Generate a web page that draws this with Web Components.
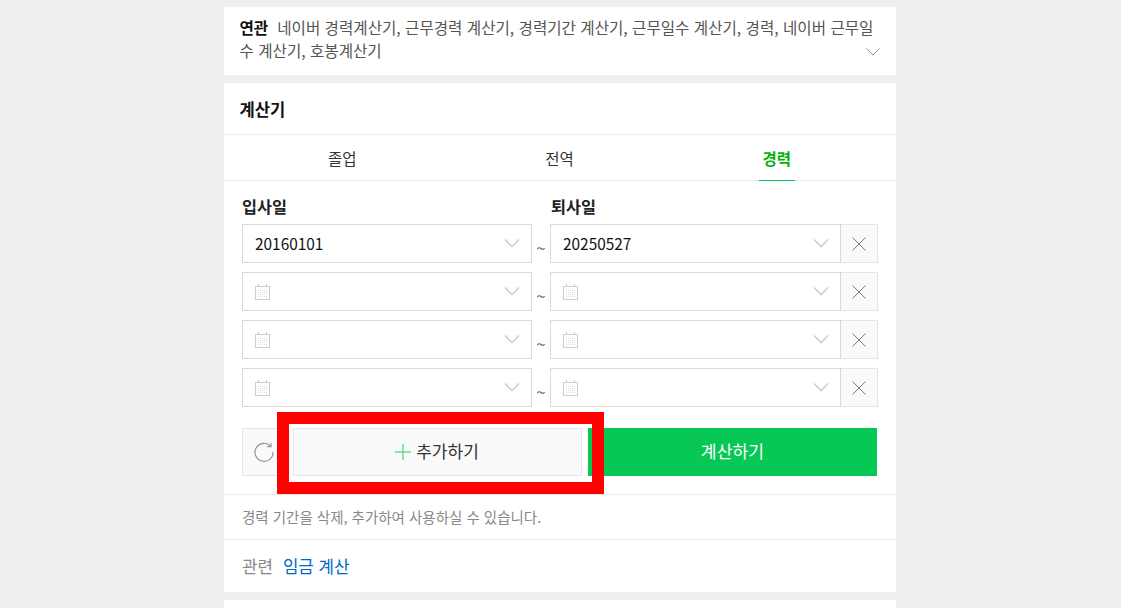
<!DOCTYPE html>
<html lang="ko">
<head>
<meta charset="utf-8">
<title>경력 계산기</title>
<style>
  html, body { margin: 0; height: 608px; overflow: hidden; background: #eeeff1; }
  body { font-family: "Noto Sans CJK KR", "Noto Sans", sans-serif; }
</style>
</head>
<body>
<search-page>
  <related-box label="연관">네이버 경력계산기, 근무경력 계산기, 경력기간 계산기, 근무일수 계산기, 경력, 네이버 근무일수 계산기, 호봉계산기</related-box>
  <calc-card heading="계산기">
    <calc-tabs slot="tabs"></calc-tabs>
    <date-row start="20160101" end="20250527"></date-row>
    <date-row></date-row>
    <date-row></date-row>
    <date-row></date-row>
  </calc-card>
  <div style="height:8px;background:#fff"></div>
</search-page>

<script>
const CHEVRON = `<svg width="16" height="10" viewBox="0 0 16 10" fill="none" stroke="#cfcfcf" stroke-width="1.6"><path d="M1 1.5l7 7 7-7"/></svg>`;
const CALENDAR = `<svg width="15" height="16" viewBox="0 0 15 16" fill="none"><path d="M3.500 0v4M11.500 0v4" stroke="#c4c4c4"/><rect x=".5" y="2.500" width="14" height="13" fill="#fff" stroke="#cfcfcf"/><path d="M3 6.500h9M3 8.500h9M3 10.500h9M3 12.500h9" stroke="#dedede" stroke-dasharray="1 1"/></svg>`;

class SearchPage extends HTMLElement {
  constructor() {
    super();
    this.attachShadow({ mode: 'open' }).innerHTML = `
      <style>
        :host { display: flex; flex-direction: column; gap: 8px; width: 672px; margin-left: 224px; padding-top: 7px; }
      </style>
      <slot></slot>`;
  }
}
customElements.define('search-page', SearchPage);

class RelatedBox extends HTMLElement {
  constructor() {
    super();
    this.attachShadow({ mode: 'open' }).innerHTML = `
      <style>
        :host { display: block; position: relative; background: #fff; height: 68px; box-sizing: border-box; padding: 9px 16px 0 15.5px; font-size: 15.6px; line-height: 23px; color: #555; }
        b { color: #111; font-weight: 700; margin-right: 9px; }
        .toggle { position: absolute; right: 16px; top: 41px; line-height: 0; }
      </style>
      <b></b><slot></slot>
      <span class="toggle"><svg width="14" height="8" viewBox="0 0 14 8" fill="none" stroke="#8f8f8f" stroke-width="1"><path d="M.5.5L7 7l6.500-6.500"/></svg></span>`;
    this.shadowRoot.querySelector('b').textContent = this.getAttribute('label');
  }
}
customElements.define('related-box', RelatedBox);

class CalcTabs extends HTMLElement {
  constructor() {
    super();
    this.attachShadow({ mode: 'open' }).innerHTML = `
      <style>
        :host { display: grid; grid-template-columns: 1fr 1fr 1fr; box-sizing: border-box; height: 46px; padding: 0 10.5px 0 9.5px; border-bottom: 1px solid #ebebeb; font-size: 15.5px; color: #333; }
        span { display: flex; justify-content: center; }
        i { font-style: normal; display: block; height: 46px; box-sizing: border-box; line-height: 47px; padding: 0 3.5px; }
        .on i { color: #03b20a; font-weight: 700; border-bottom: 1px solid #03c75a; }
      </style>
      <span><i>졸업</i></span><span><i>전역</i></span><span class="on"><i>경력</i></span>`;
  }
}
customElements.define('calc-tabs', CalcTabs);

class DateRow extends HTMLElement {
  constructor() {
    super();
    const field = v => `<div class="field">${v ? `<span class="val">${v}</span>` : CALENDAR}<span class="chev">${CHEVRON}</span></div>`;
    this.attachShadow({ mode: 'open' }).innerHTML = `
      <style>
        :host { display: grid; grid-template-columns: 290px 18px 291px 37px; grid-template-rows: 39px; height: 39px; }
        .field { display: flex; align-items: center; justify-content: space-between; box-sizing: border-box; border: 1px solid #d9d9d9; padding: 0 11px 0 12px; background: #fff; }
        .val { font-size: 15.4px; color: #111; margin-top: -2px; }
        .chev { line-height: 0; margin-top: -2px; }
        svg { display: block; }
        .tilde { font-size: 17px; color: #666; text-align: center; line-height: 48px; height: 39px; }
        .del { display: flex; align-items: center; justify-content: center; box-sizing: border-box; border: 1px solid #e3e5e9; border-left: 0; background: #f9fafc; }
      </style>
      ${field(this.getAttribute('start'))}
      <span class="tilde">~</span>
      ${field(this.getAttribute('end'))}
      <span class="del"><svg width="14" height="14" viewBox="0 0 14 14" stroke="#777" stroke-width="1" fill="none"><path d="M.5.5l13 13M13.500.5l-13 13"/></svg></span>`;
  }
}
customElements.define('date-row', DateRow);

class CalcCard extends HTMLElement {
  constructor() {
    super();
    this.attachShadow({ mode: 'open' }).innerHTML = `
      <style>
        :host { display: block; position: relative; background: #fff; height: 509px; }
        h2 { margin: 0; height: 51px; line-height: 52px; padding-left: 15.5px; font-size: 16.6px; font-weight: 700; color: #111; border-bottom: 1px solid #ebebeb; }
        .body { padding: 12px 18px 0; }
        .labels { display: grid; grid-template-columns: 290px 18px 291px; height: 31px; font-size: 16.3px; font-weight: 700; color: #222; line-height: 26px; }
        .labels span:last-child { grid-column: 3; padding-left: 1px; }
        .rows { display: flex; flex-direction: column; gap: 9px; }
        .actions { display: grid; grid-template-columns: 45px 289px 289px; column-gap: 6px; height: 48px; margin: 21px 1px 0 0; }
        .actions > div { display: flex; align-items: center; justify-content: center; box-sizing: border-box; }
        .actions span { margin-top: -3px; }
        .reset { background: #f9fafc; border: 1px solid #e3e5e9; justify-content: flex-start !important; padding-left: 11px; }
        .add { background: #f9fafc; border: 1px solid #e3e5e9; color: #333; gap: 5px; font-size: 17px; padding-right: 1px; }
        .go { background: #07c755; color: #fff; font-size: 17.2px; }
        .note { margin-top: 18px; border-top: 1px solid #ebebeb; height: 44px; padding-left: 18px; font-size: 14.5px; line-height: 43px; color: #888; }
        .more { border-top: 1px solid #ebebeb; padding-left: 18px; font-size: 16.8px; line-height: 53px; color: #888; }
        .more a { color: #0068c3; margin-left: 10px; text-decoration: none; }
        .mark { position: absolute; left: 53px; top: 329px; width: 327px; height: 82px; box-sizing: border-box; border: 12px solid #f00; }
      </style>
      <h2></h2>
      <slot name="tabs"></slot>
      <div class="body">
        <div class="labels"><span>입사일</span><span>퇴사일</span></div>
        <div class="rows"><slot></slot></div>
        <div class="actions">
          <div class="reset"><svg width="20" height="20" viewBox="0 0 20 20" fill="none" stroke="#8c8c8c" stroke-width="1.1"><path d="M16.600 4.200A9 9 0 1 0 19 10"/><path d="M17 .8v3.900h-4"/></svg></div>
          <div class="add"><svg width="16" height="16" viewBox="0 0 16 16" stroke="#6fdc94" stroke-width="1.500"><path d="M8 0v16M0 8h16"/></svg><span>추가하기</span></div>
          <div class="go"><span>계산하기</span></div>
        </div>
      </div>
      <div class="note">경력 기간을 삭제, 추가하여 사용하실 수 있습니다.</div>
      <div class="more">관련<a href="#">임금 계산</a></div>
      <div class="mark"></div>`;
    this.shadowRoot.querySelector('h2').textContent = this.getAttribute('heading');
  }
}
customElements.define('calc-card', CalcCard);
</script>
</body>
</html>
